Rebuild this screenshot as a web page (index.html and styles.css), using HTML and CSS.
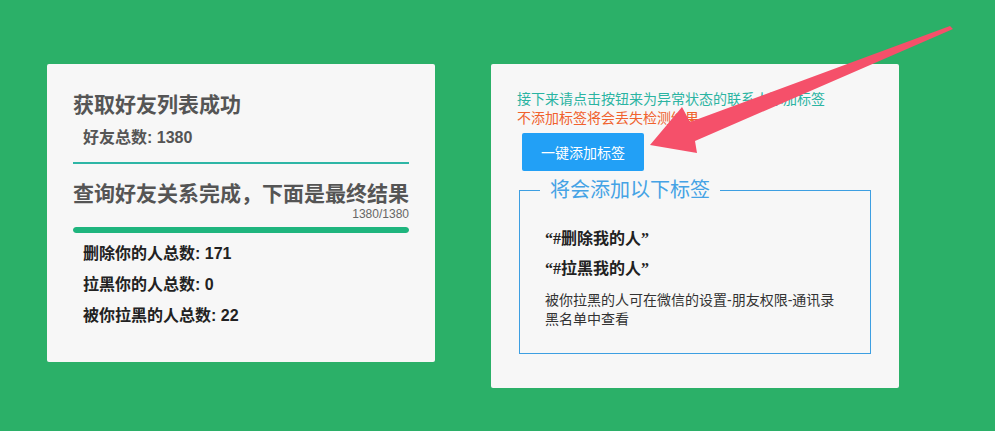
FILE: index.html
```html
<!DOCTYPE html>
<html lang="zh-CN">
<head>
  <meta charset="UTF-8"/>
  <meta name="viewport" content="width=device-width,initial-scale=1.0"/>
  <title>好友检测结果</title>
  <link rel="stylesheet" href="styles.css">
</head>
<body>
  <div class="page">
    <section class="card card-result">
      <h2 class="title">获取好友列表成功</h2>
      <p class="total">好友总数: 1380</p>
      <hr class="divider"/>
      <h2 class="title title-second">查询好友关系完成，下面是最终结果</h2>
      <div class="progress-count">1380/1380</div>
      <div class="progress"><div class="progress-fill" style="width:100%"></div></div>
      <ul class="stats">
        <li>删除你的人总数: 171</li>
        <li>拉黑你的人总数: 0</li>
        <li>被你拉黑的人总数: 22</li>
      </ul>
    </section>

    <section class="card card-tags">
      <p class="hint hint-info">接下来请点击按钮来为异常状态的联系人添加标签</p>
      <p class="hint hint-warn">不添加标签将会丢失检测结果</p>
      <button class="btn-tag">一键添加标签</button>
      <fieldset class="tag-box">
        <legend>将会添加以下标签</legend>
        <div class="tag-name">“#删除我的人”</div>
        <div class="tag-name">“#拉黑我的人”</div>
        <p class="tag-note">被你拉黑的人可在微信的设置-朋友权限-通讯录黑名单中查看</p>
      </fieldset>
    </section>
  </div>

  <svg class="arrow" xmlns="http://www.w3.org/2000/svg" viewBox="0 0 995 431" width="995" height="431">
    <polygon points="650,145 697,153 695,141 953,29 950,26 690,122 682,107"/>
  </svg>
</body>
</html>
```
FILE: styles.css
```css
/* ===== Global ===== */
* { margin: 0; padding: 0; box-sizing: border-box; }
body {
  font-family: 'Liberation Sans', 'Noto Sans CJK SC', sans-serif;
  background: #2bb068;
  width: 995px;
  height: 431px;
  overflow: hidden;
}
.page {
  display: flex;
  align-items: flex-start;
  gap: 56px;
  padding: 64px 0 0 47px;
}

/* ===== Cards ===== */
.card {
  background: #f7f7f7;
  border-radius: 2px;
}

/* left card */
.card-result {
  width: 388px;
  height: 298px;
  padding: 28px 26px 0 26px;
}
.title {
  font-size: 21px;
  line-height: 26px;
  font-weight: 700;
  color: #555;
}
.title-second { margin-top: 17px; }
.total {
  margin-top: 10px;
  padding-left: 10px;
  font-size: 16px;
  line-height: 20px;
  font-weight: 700;
  color: #555;
}
.divider {
  border: none;
  border-top: 2px solid #2eb6a6;
  margin-top: 14px;
}
.progress-count {
  text-align: right;
  font-size: 12px;
  line-height: 14px;
  color: #666;
}
.progress {
  margin-top: 6px;
  height: 6px;
  border-radius: 3px;
  background: #e2e2e2;
  overflow: hidden;
}
.progress-fill { height: 100%; background: #1fb57e; border-radius: 3px; }
.stats { list-style: none; margin-top: 11px; padding-left: 10px; }
.stats li {
  font-size: 16px;
  line-height: 20px;
  font-weight: 700;
  color: #222;
  margin-bottom: 11px;
}

/* right card */
.card-tags {
  width: 408px;
  height: 324px;
  padding: 26px 26px 0 26px;
}
.hint { font-size: 14px; line-height: 19px; }
.hint-info { color: #2bb4a2; }
.hint-warn { color: #f0622d; }
.btn-tag {
  display: block;
  margin: 5px 0 0 5px;
  width: 122px;
  height: 38px;
  border: none;
  border-radius: 2px;
  background: #22a0f6;
  color: #fff;
  font-family: 'Liberation Sans', 'Noto Sans CJK SC', sans-serif;
  font-size: 14px;
}
.tag-box {
  margin: 6px 0 0 2px;
  width: 352px;
  border: 1px solid #3d9fe2;
  padding: 0 24px 24px 25px;
}
.tag-box legend {
  margin-left: -5px;
  padding: 0 10px;
  font-size: 20px;
  line-height: 26px;
  color: #45a3e5;
}
.tag-name {
  font-family: 'Liberation Serif', 'Noto Sans CJK SC', serif;
  font-size: 16px;
  line-height: 22px;
  font-weight: 700;
  color: #222;
  margin-bottom: 8px;
}
.tag-name:first-of-type { margin-top: 25px; }
.tag-note {
  margin-top: 11px;
  font-size: 14px;
  line-height: 19px;
  color: #333;
}

/* ===== Annotation arrow ===== */
.arrow {
  position: absolute;
  top: 0;
  left: 0;
  pointer-events: none;
}
.arrow polygon { fill: #f5506a; }
```
